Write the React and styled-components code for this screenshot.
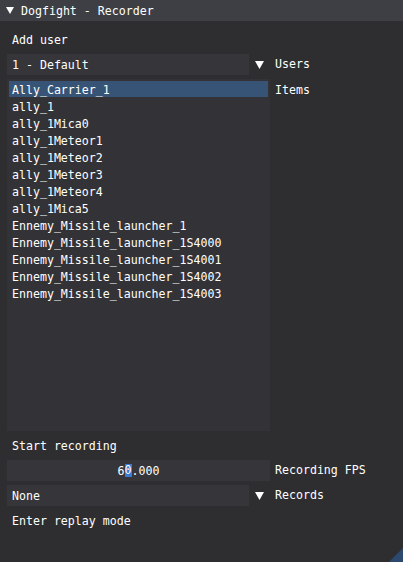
import styled, { createGlobalStyle } from "styled-components";

const GlobalStyle = createGlobalStyle`
  html, body {
    margin: 0;
    padding: 0;
    background: #2e2e31;
  }
  body {
    font-family: "DejaVu Sans Mono", "Liberation Mono", monospace;
    font-size: 11.6px;
    color: #ffffff;
  }
`;

const items = [
  "Ally_Carrier_1",
  "ally_1",
  "ally_1Mica0",
  "ally_1Meteor1",
  "ally_1Meteor2",
  "ally_1Meteor3",
  "ally_1Meteor4",
  "ally_1Mica5",
  "Ennemy_Missile_launcher_1",
  "Ennemy_Missile_launcher_1S4000",
  "Ennemy_Missile_launcher_1S4001",
  "Ennemy_Missile_launcher_1S4002",
  "Ennemy_Missile_launcher_1S4003",
];

const Arrow = ({ w = 9, h = 8 }) => (
  <svg width={w} height={h} viewBox={`0 0 ${w} ${h}`}>
    <polygon points={`0,0 ${w},0 ${w / 2},${h}`} fill="#ffffff" />
  </svg>
);

const Combo = ({ value, label }) => (
  <Row>
    <ComboFrame>{value}</ComboFrame>
    <ArrowButton>
      <Arrow />
    </ArrowButton>
    <Label>{label}</Label>
  </Row>
);

const App = () => {
  return (
    <Window>
      <GlobalStyle />
      <TitleBar>
        <Arrow w={8} h={7} />
        <Title>Dogfight - Recorder</Title>
      </TitleBar>
      <Content>
        <TextButton>Add user</TextButton>
        <Combo value="1 - Default" label="Users" />
        <ListRow>
          <ListBox>
            {items.map((name, i) => (
              <Item key={name} selected={i === 0}>
                {name}
              </Item>
            ))}
          </ListBox>
          <ListLabel>Items</ListLabel>
        </ListRow>
        <TextButton>Start recording</TextButton>
        <Row>
          <InputFrame>
            6<Selected>0</Selected>.000
          </InputFrame>
          <Label>Recording FPS</Label>
        </Row>
        <Combo value="None" label="Records" />
        <TextButton>Enter replay mode</TextButton>
      </Content>
      <Grip>
        <svg width="14" height="14" viewBox="0 0 14 14">
          <polygon points="14,0 14,14 0,14" fill="#2c4a70" />
        </svg>
      </Grip>
    </Window>
  );
};

const Window = styled.div`
  position: relative;
  width: 403px;
  height: 562px;
  background: #2e2e31;
  overflow: hidden;
`;

const TitleBar = styled.div`
  height: 21px;
  background: #3e3f44;
  display: flex;
  align-items: center;
  padding-left: 6px;
  gap: 7px;
`;

const Title = styled.span`
  line-height: 22px;
`;

const Content = styled.div`
  display: flex;
  flex-direction: column;
  gap: 4px;
  padding: 8px 7px 0 7px;
`;

const Row = styled.div`
  display: flex;
  align-items: center;
  height: 21px;
`;

const TextButton = styled.div`
  height: 21px;
  line-height: 23px;
  padding-left: 5px;
`;

const ComboFrame = styled.div`
  width: 237px;
  height: 21px;
  line-height: 23px;
  padding-left: 5px;
  background: #36363a;
`;

const ArrowButton = styled.div`
  width: 21px;
  height: 21px;
  display: flex;
  align-items: center;
  justify-content: center;
`;

const Label = styled.span`
  margin-left: 5px;
  line-height: 23px;
`;

const ListRow = styled.div`
  display: flex;
  align-items: flex-start;
`;

const ListBox = styled.div`
  width: 259px;
  height: 348px;
  padding: 2px;
  background: #333337;
  display: flex;
  flex-direction: column;
`;

const Item = styled.div`
  height: 16px;
  line-height: 18px;
  margin-bottom: 1px;
  padding-left: 3px;
  background: ${(p) => (p.selected ? "#375477" : "transparent")};
  white-space: nowrap;
`;

const ListLabel = styled.span`
  margin-left: 5px;
  margin-top: 2px;
  line-height: 18px;
`;

const InputFrame = styled.div`
  width: 263px;
  height: 21px;
  line-height: 23px;
  background: #36363a;
  text-align: center;
  white-space: pre;
`;

const Selected = styled.span`
  background: #3d7bd3;
  display: inline-block;
  width: 7px;
  line-height: 13px;
  vertical-align: 1px;
`;

const Grip = styled.div`
  position: absolute;
  right: 0;
  bottom: 0;
  width: 14px;
  height: 14px;
  line-height: 0;
`;

export default App;
